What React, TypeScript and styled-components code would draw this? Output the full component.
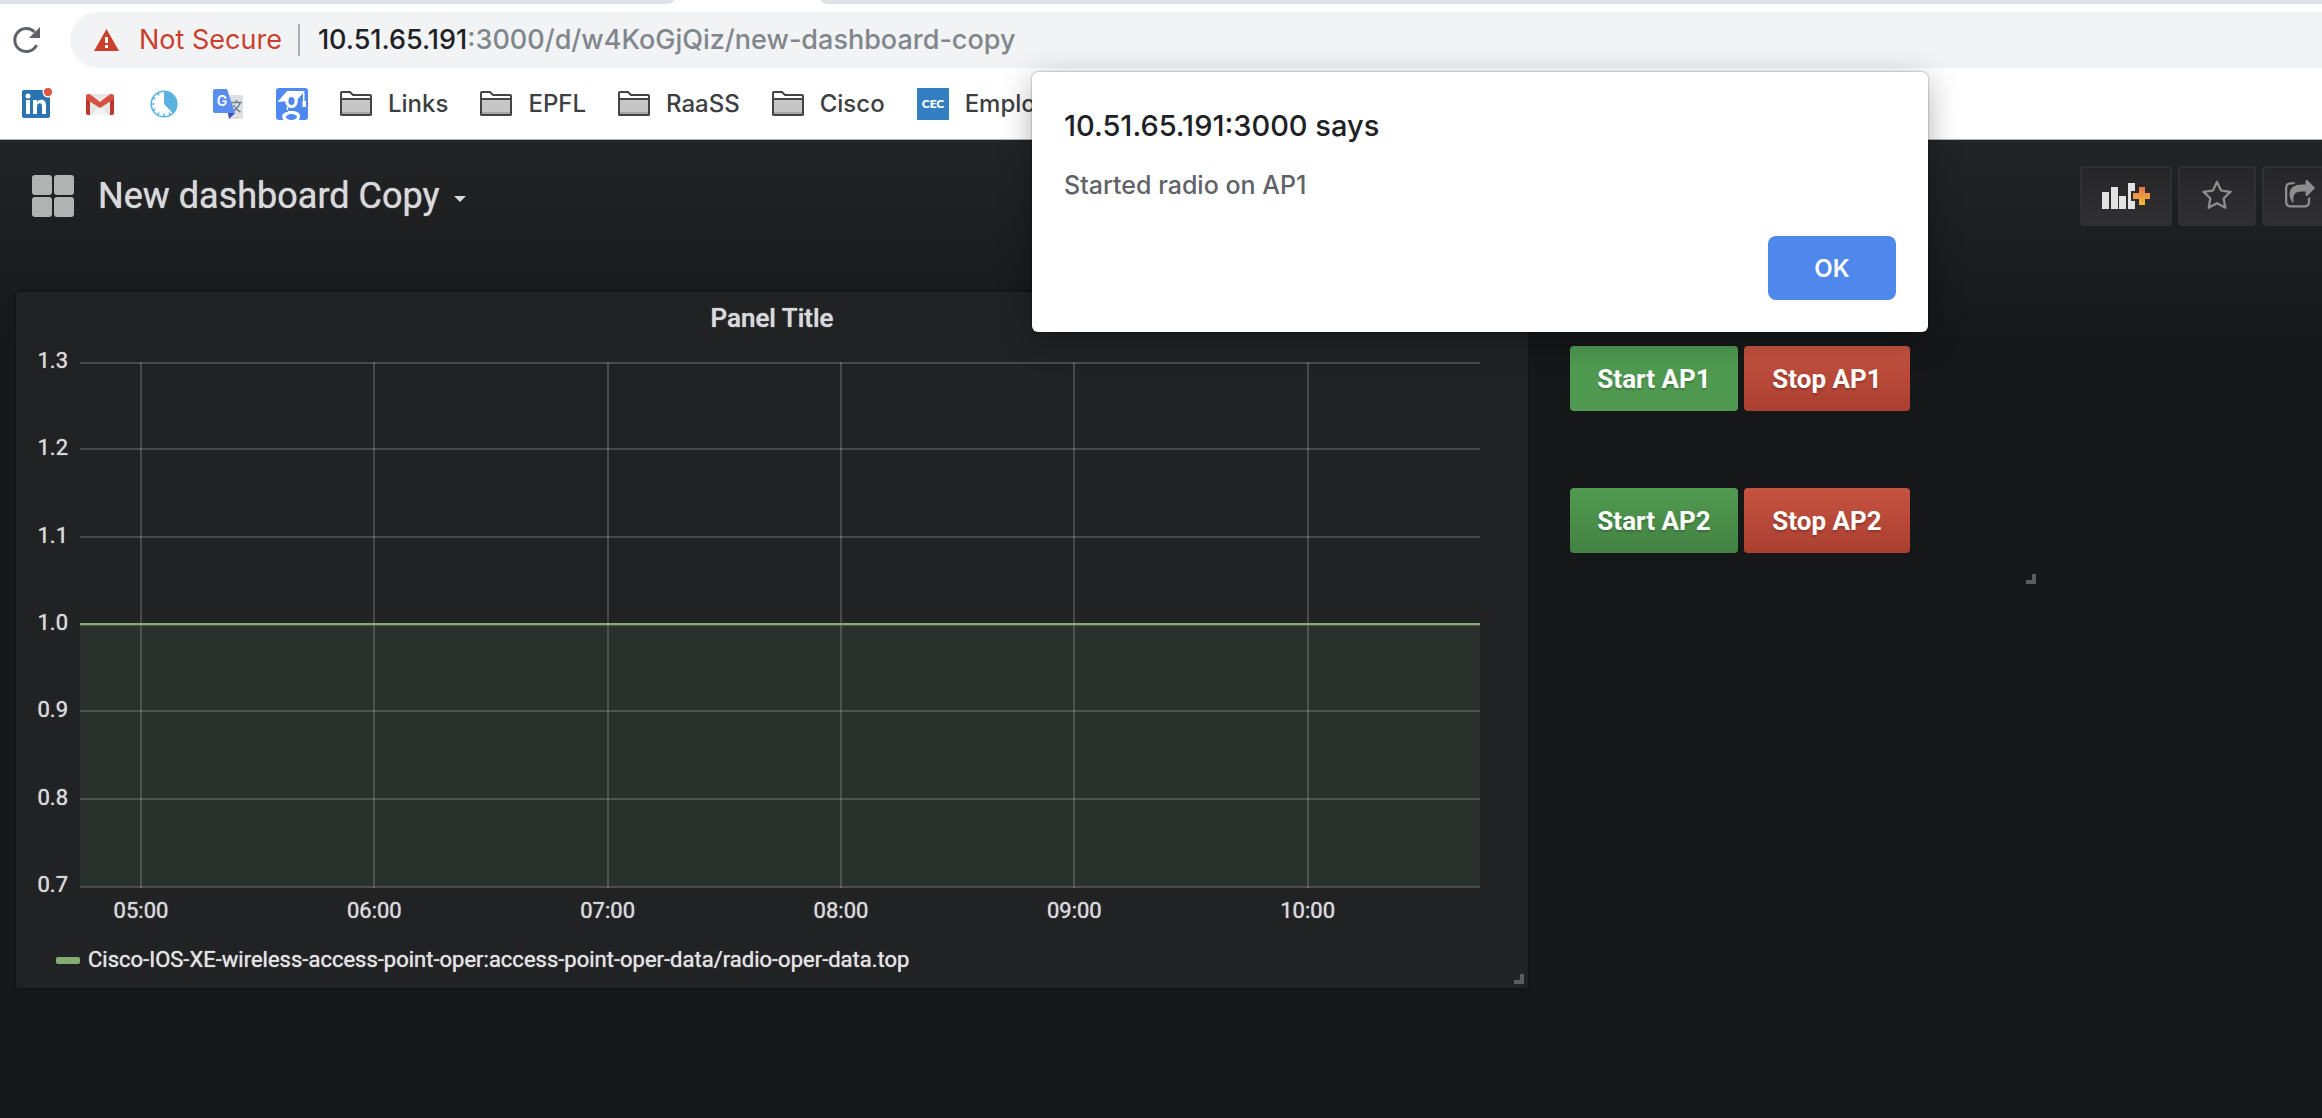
import React from "react";
import styled, { createGlobalStyle } from "styled-components";

const GlobalStyle = createGlobalStyle`
  *, *::before, *::after { box-sizing: border-box; }
  body { margin: 0; background: #161719; overflow: hidden; }
  button { font: inherit; border: 0; padding: 0; cursor: pointer; }
  a { color: inherit; text-decoration: none; }
  h1, h2, p { margin: 0; font: inherit; }
  svg { display: block; flex: none; }
`;

const Window = styled.div`
  position: relative;
  display: flex;
  flex-direction: column;
  min-height: 100vh;
  overflow: hidden;
`;

/* ---------- browser chrome ---------- */

const Chrome = styled.header`
  background: #fff;
  border-bottom: 1px solid #b0b2b4;
  font-family: Inter, "Liberation Sans", sans-serif;
`;

const TabStrip = styled.div`
  display: flex;
  height: 4px;
`;

const TabEdge = styled.div<{ $side: "left" | "right" }>`
  background: #dee1e6;
  ${(p) =>
    p.$side === "left"
      ? "flex: 0 0 674px; border-bottom-right-radius: 8px 4px;"
      : "flex: 1; margin-left: 147px; border-bottom-left-radius: 8px 4px;"}
`;

const Toolbar = styled.div`
  display: flex;
  align-items: center;
  padding: 8px 0 6px 12px;
  gap: 28px;
`;

const IconButton = styled.button`
  background: none;
`;

const AddressBar = styled.div`
  flex: 1;
  display: flex;
  align-items: center;
  height: 56px;
  padding-left: 24px;
  border-radius: 28px 0 0 28px;
  background: #f1f3f4;
  font-size: 27px;
  line-height: 32px;
  white-space: nowrap;
`;

const Security = styled.span`
  display: flex;
  align-items: center;
  gap: 20px;
  height: 32px;
  margin-right: 18px;
  padding-right: 16px;
  border-right: 2px solid #a9acb0;
  color: #cb3f2e;
`;

const Url = styled.span`
  color: #80868b;
  font-weight: 500;
`;

const Host = styled.span`
  color: #202124;
`;

const Bookmarks = styled.nav`
  display: flex;
  align-items: center;
  gap: 32px;
  height: 65px;
  padding: 0 20px 5px;
  font-size: 24px;
  font-weight: 500;
  line-height: 30px;
  color: #3c4043;
  white-space: nowrap;
`;

const Bookmark = styled.a`
  display: flex;
  align-items: center;
  gap: 16px;
`;

/* ---------- dashboard ---------- */

const Dashboard = styled.main`
  flex: 1;
  background: #161719 linear-gradient(#222426, #161719) 0 0 / 100% 200px no-repeat;
  color: #d8d9da;
  font-family: Roboto, "Liberation Sans", sans-serif;
`;

const NavBar = styled.div`
  display: flex;
  align-items: center;
  gap: 24px;
  padding: 26px 0 64px 32px;
`;

const DashTitle = styled.h1`
  flex: 1;
`;

const TitleButton = styled.button`
  display: flex;
  align-items: center;
  gap: 14px;
  background: none;
  color: #d8d9da;
  font-size: 36px;
  line-height: 44px;
  text-shadow: 0 0 1px currentColor;
`;

const Caret = styled.span`
  margin-top: 6px;
  border: 6px solid transparent;
  border-top-color: #d8d9da;
  border-bottom: 0;
`;

const Actions = styled.div`
  display: flex;
  gap: 6px;
  margin-right: -18px;
`;

const NavButton = styled.button<{ $wide?: boolean }>`
  display: flex;
  align-items: center;
  justify-content: center;
  width: ${(p) => (p.$wide ? 92 : 78)}px;
  height: 60px;
  border: 2px solid #2f2f32;
  border-radius: 4px;
  background: linear-gradient(#262628, #303032);
`;

const PanelGrid = styled.div`
  display: grid;
  grid-template-columns: repeat(18, minmax(0, 1fr));
  align-items: start;
  gap: 20px;
  padding: 0 24px 0 14px;
`;

const Panel = styled.section<{ $span: number; $clear?: boolean }>`
  position: relative;
  grid-column: span ${(p) => p.$span};
  border: 2px solid ${(p) => (p.$clear ? "transparent" : "#141516")};
  border-radius: 6px;
  background: ${(p) => (p.$clear ? "transparent" : "#212224")};
`;

const PanelTitle = styled.h2`
  padding-top: 8px;
  font-size: 26px;
  font-weight: 500;
  line-height: 36px;
  text-align: center;
  text-shadow: 0 0 1px currentColor;
`;

const Plot = styled.svg`
  width: calc(100% - 112px);
  height: 526px;
  margin: 26px 48px 0 64px;
  overflow: visible;
  font-size: 22px;
  text-shadow: 0 0 1px #d8d9da;
`;

const Legend = styled.div`
  display: flex;
  align-items: center;
  gap: 8px;
  padding: 56px 0 12px 40px;
  font-size: 22px;
  line-height: 32px;
  color: #e3e3e3;
  text-shadow: 0 0 1px currentColor;
`;

const Swatch = styled.span`
  width: 24px;
  height: 7px;
  border-radius: 2px;
  background: #84ab72;
`;

const ResizeHandle = styled.span`
  position: absolute;
  right: 4px;
  bottom: 4px;
  width: 10px;
  height: 10px;
  border: solid #5c5c5d;
  border-width: 0 4px 4px 0;
`;

const ControlPanel = styled(Panel)`
  display: flex;
  flex-direction: column;
  gap: 77px;
  padding: 54px 18px 35px;
`;

const ControlRow = styled.div`
  display: flex;
  gap: 6px;
`;

const ApButton = styled.button<{ $tone: "go" | "lit" | "stop" }>`
  width: ${(p) => (p.$tone === "stop" ? 166 : 168)}px;
  height: 65px;
  border-radius: 4px;
  color: #fff;
  font-size: 26px;
  font-weight: 700;
  line-height: 32px;
  text-shadow: 0 2px 2px rgba(0, 0, 0, 0.2);
  background: ${(p) =>
    ({
      go: "linear-gradient(#509a50, #438243)",
      lit: "#4f9a50",
      stop: "linear-gradient(#c65341, #aa3f30)",
    })[p.$tone]};
`;

/* ---------- alert ---------- */

const Alert = styled.div`
  position: absolute;
  top: 72px;
  left: 1032px;
  display: flex;
  flex-direction: column;
  width: 896px;
  padding: 34px 32px 32px;
  border-radius: 6px;
  background: #fff;
  box-shadow: 0 0 2px rgba(0, 0, 0, 0.5), 0 8px 32px rgba(0, 0, 0, 0.3);
  font-family: Inter, "Liberation Sans", sans-serif;
  font-weight: 500;
`;

const AlertTitle = styled.h2`
  font-size: 29px;
  line-height: 40px;
  color: #202124;
`;

const AlertText = styled.p`
  margin: 22px 0 34px;
  font-size: 25px;
  line-height: 34px;
  color: #5f6368;
`;

const OkButton = styled.button`
  align-self: flex-end;
  width: 128px;
  height: 64px;
  border-radius: 8px;
  background: #4f87ed;
  color: #fff;
  font-size: 24px;
  font-weight: 600;
`;

/* ---------- icons ---------- */

const ReloadIcon = () => (
  <svg width="30" height="30" viewBox="0 0 30 30" fill="none">
    <path d="M24.6 20.2A11.5 11.5 0 1 1 22.5 7" stroke="#5f6368" strokeWidth="3" />
    <path d="M28 2v11H17z" fill="#5f6368" />
  </svg>
);

const WarningIcon = () => (
  <svg width="25" height="22" viewBox="0 0 25 22">
    <path d="M12.500 0 25 22H0z" fill="#cb3f2e" />
    <path d="M11 8h3v6h-3zM11 16h3v3h-3z" fill="#fff" />
  </svg>
);

const LinkedInIcon = () => (
  <svg width="32" height="32" viewBox="0 0 32 32">
    <rect x="2" y="2" width="28" height="28" rx="2" fill="#2b73b1" />
    <circle cx="8" cy="8" r="2.500" fill="#fff" />
    <path d="M6 12h4v14H6zM13 12h4v2c1-1.600 2.500-2.300 4.300-2.300 3.500 0 4.700 2.300 4.700 5.800V26h-4v-7.500c0-2-.6-3.200-2.200-3.200-1.900 0-2.800 1.400-2.800 3.300V26h-4z" fill="#fff" />
    <circle cx="28" cy="4" r="5.500" fill="#fff" />
    <circle cx="28" cy="4" r="4.200" fill="#df5548" />
  </svg>
);

const GmailIcon = () => (
  <svg width="32" height="32" viewBox="0 0 32 32">
    <path d="M3 6h26v21H3z" fill="#e6e6e6" />
    <path d="M7 27 16 18l9 9z" fill="#f3f3f3" />
    <path d="M2 8v17a2 2 0 0 0 2 2h2V9zM30 8v17a2 2 0 0 1-2 2h-2V9z" fill="#b93a2d" />
    <path d="M2 8c0-2 3-3 5-1l9 7 9-7c2-2 5-1 5 1v3L16 20 2 11z" fill="#d64f41" />
  </svg>
);

const ClockIcon = () => (
  <svg width="32" height="32" viewBox="0 0 32 32">
    <circle cx="16" cy="16" r="12.800" fill="#fff" stroke="#5ab4df" strokeWidth="1.600" />
    <path d="M16 16V3a13 13 0 0 1 9 22.400z" fill="#5ab4df" />
    <g stroke="#5ab4df" strokeWidth="1.600">
      <path d="M3 16h3.500M16 29v-3.500M9.500 4.700l1.500 2.700M4.700 9.500l2.700 1.500M4.700 22.500l2.700-1.500M9.500 27.300l1.500-2.700M22.500 27.300 21 24.600" />
    </g>
  </svg>
);

const TranslateIcon = () => (
  <svg width="32" height="32" viewBox="0 0 32 32">
    <path d="M12 7h17a2 2 0 0 1 2 2v20a2 2 0 0 1-2 2H17z" fill="#dedfe1" />
    <path d="M19 14.500h11M24.500 12v2.500M28 14.500c-1 4-4 7-7 9M21.500 17c1.500 3 4 5.500 7 7" stroke="#6d8391" strokeWidth="1.500" fill="none" />
    <path d="M16 25h7l-6 6z" fill="#3a4fb5" />
    <path d="M3 1h12l8 24H3a2 2 0 0 1-2-2V3a2 2 0 0 1 2-2z" fill="#5a8df0" />
    <text x="10" y="17.500" textAnchor="middle" fontSize="14" fontWeight="600" fill="#fff">G</text>
  </svg>
);

const ScholarIcon = () => (
  <svg width="32" height="32" viewBox="0 0 32 32">
    <rect width="32" height="32" rx="3" fill="#4f88ef" />
    <path d="M11 3h18l-9 10H13L1.500 14z" fill="#fff" />
    <path d="M27 5h1.500v8H30v6h-3.500v-6H27z" fill="#fff" />
    <ellipse cx="15.500" cy="13" rx="4.700" ry="5.500" fill="#4f88ef" stroke="#fff" strokeWidth="3.200" />
    <path d="M12 18c-3 3-1 5 3 5 6 0 9 1.500 9 5.500 0 1.300-.4 2.500-1 3.500H7.500C4 27 8 24 12 24" fill="#fff" />
    <ellipse cx="15.500" cy="29" rx="5.500" ry="3" fill="#4f88ef" />
  </svg>
);

const FolderIcon = () => (
  <svg width="32" height="32" viewBox="0 0 32 32">
    <path d="M1 26V5a1 1 0 0 1 1-1h8l3 3h17a1 1 0 0 1 1 1v18a1 1 0 0 1-1 1H2a1 1 0 0 1-1-1z" fill="#fff" stroke="#444" strokeWidth="2" />
    <path d="M1 11h30v15a1 1 0 0 1-1 1H2a1 1 0 0 1-1-1z" fill="#c6c6c6" stroke="#444" strokeWidth="2" />
    <path d="M2 25h28" stroke="#a5a5a5" strokeWidth="2" />
  </svg>
);

const CecIcon = () => (
  <svg width="32" height="32" viewBox="0 0 32 32">
    <rect width="32" height="32" fill="#337fc1" />
    <text x="16" y="20" textAnchor="middle" fontFamily="Lato, sans-serif" fontSize="12" fontWeight="800" fill="#fff">CEC</text>
  </svg>
);

const GridIcon = () => (
  <svg width="42" height="42" viewBox="0 0 42 42" fill="#b1b2b2">
    <rect width="20" height="20" rx="3" />
    <rect x="22" width="20" height="20" rx="3" />
    <rect y="22" width="20" height="20" rx="3" />
    <rect x="22" y="22" width="20" height="20" rx="3" />
  </svg>
);

const AddPanelIcon = () => (
  <svg width="48" height="26" viewBox="0 0 48 26">
    <defs>
      <linearGradient id="plus" x1="0" y1="4" x2="0" y2="22" gradientUnits="userSpaceOnUse">
        <stop stopColor="#e5744a" />
        <stop offset="1" stopColor="#f1bd38" />
      </linearGradient>
    </defs>
    <path d="M0 9h7v17H0zM9 4h7v22H9zM17 13h7v13h-7zM26 0h7v8h-4v10h4v8h-7z" fill="#e3e3e3" />
    <path d="M37 4h6v6h5v6h-5v6h-6v-6h-6v-6h6z" fill="url(#plus)" />
  </svg>
);

const StarIcon = () => (
  <svg width="32" height="32" viewBox="0 0 1792 1792" fill="#8e8e8e">
    <path d="M1201 1004l306-297-422-62-189-382-189 382-422 62 306 297-73 421 378-199 377 199zm527-357q0 22-26 48l-363 354 86 500q1 7 1 20 0 50-41 50-19 0-40-12l-449-236-449 236q-22 12-40 12-21 0-31.500-14.500t-10.500-35.500q0-6 2-20l86-500-364-354q-25-27-25-48 0-37 56-46l502-73 225-455q19-41 49-41t49 41l225 455 502 73q56 9 56 46z" />
  </svg>
);

const ShareIcon = () => (
  <svg width="32" height="32" viewBox="0 0 1792 1792" fill="#8e8e8e">
    <path d="M1408 989v259q0 119-84.500 203.500t-203.500 84.500h-832q-119 0-203.500-84.500t-84.500-203.500v-832q0-119 84.500-203.500t203.500-84.500h255q13 0 22.500 9.500t9.500 22.500q0 27-26 32-77 26-133 60-10 4-16 4h-112q-66 0-113 47t-47 113v832q0 66 47 113t113 47h832q66 0 113-47t47-113v-214q0-19 18-28 28-13 54-37 16-16 35-8 21 9 21 29zm237-496l-384 384q-18 19-45 19-12 0-25-5-39-17-39-59v-192h-160q-323 0-438 131-119 137-74 473 3 23-20 34-8 2-12 2-16 0-26-13-10-14-21-31t-39.500-68.500-49.500-99.500-38.500-114-17.500-122q0-49 3.500-91t14-90 28-88 47-81.500 68.500-74 94.500-61.500 124.500-48.500 159.500-30.500 196.500-11h160v-192q0-42 39-59 13-5 25-5 26 0 45 19l384 384q19 19 19 45t-19 45z" />
  </svg>
);

/* ---------- data ---------- */

const BOOKMARKS = [
  { name: "LinkedIn", icon: LinkedInIcon, iconOnly: true },
  { name: "Gmail", icon: GmailIcon, iconOnly: true },
  { name: "Time tracker", icon: ClockIcon, iconOnly: true },
  { name: "Google Translate", icon: TranslateIcon, iconOnly: true },
  { name: "Google Scholar", icon: ScholarIcon, iconOnly: true },
  { name: "Links", icon: FolderIcon },
  { name: "EPFL", icon: FolderIcon },
  { name: "RaaSS", icon: FolderIcon },
  { name: "Cisco", icon: FolderIcon },
  { name: "Employee", icon: CecIcon },
];

const VALUES = ["1.3", "1.2", "1.1", "1.0", "0.9", "0.8", "0.7"];
const HOURS = ["05:00", "06:00", "07:00", "08:00", "09:00", "10:00"];

/* The visible range is six hours, starting 15 minutes 40 seconds before 05:00. */
const hourX = (i: number) => `${((i * 60 + 15.68) / 360) * 100}%`;
const valueY = (i: number) => (i * 524) / (VALUES.length - 1);
/* Grid lines are two pixels thick and sit on even rows. */
const gridY = (i: number) => 1 + 2 * Math.floor(valueY(i) / 2);
const seriesY = gridY(3) - 1;

const Chart = () => (
  <Plot role="img" aria-label="Radio operational data">
    <rect x="0" y={seriesY} width="100%" height={gridY(6) - seriesY} fill="#7eb26d" fillOpacity="0.1" />
    <g stroke="#c8c8c8" strokeOpacity="0.24" strokeWidth="2" shapeRendering="crispEdges">
      {VALUES.map((v, i) => (
        <line key={v} x1="0" x2="100%" y1={gridY(i)} y2={gridY(i)} />
      ))}
      {HOURS.map((h, i) => (
        <line key={h} x1={hourX(i)} x2={hourX(i)} y1="0" y2="526" />
      ))}
    </g>
    <line x1="0" x2="100%" y1={seriesY} y2={seriesY} stroke="#8aad78" strokeWidth="2" shapeRendering="crispEdges" />
    <g fill="#d8d9da">
      {VALUES.map((v, i) => (
        <text key={v} x="-12" y={Math.round(valueY(i)) + 6} textAnchor="end">{v}</text>
      ))}
      {HOURS.map((h, i) => (
        <text key={h} x={hourX(i)} y="556" textAnchor="middle">{h}</text>
      ))}
    </g>
  </Plot>
);

export default function App() {
  return (
    <Window>
      <GlobalStyle />
      <Chrome>
        <TabStrip>
          <TabEdge $side="left" />
          <TabEdge $side="right" />
        </TabStrip>
        <Toolbar>
          <IconButton type="button" aria-label="Reload"><ReloadIcon /></IconButton>
          <AddressBar>
            <Security><WarningIcon />Not Secure</Security>
            <Url><Host>10.51.65.191</Host>:3000/d/w4KoGjQiz/new-dashboard-copy</Url>
          </AddressBar>
        </Toolbar>
        <Bookmarks aria-label="Bookmarks">
          {BOOKMARKS.map(({ name, icon: Icon, iconOnly }) => (
            <Bookmark key={name} href="#" aria-label={name}>
              <Icon />
              {!iconOnly && name}
            </Bookmark>
          ))}
        </Bookmarks>
      </Chrome>

      <Dashboard>
        <NavBar>
          <GridIcon />
          <DashTitle>
            <TitleButton type="button">New dashboard Copy<Caret /></TitleButton>
          </DashTitle>
          <Actions>
            <NavButton type="button" $wide aria-label="Add panel"><AddPanelIcon /></NavButton>
            <NavButton type="button" aria-label="Mark as favorite"><StarIcon /></NavButton>
            <NavButton type="button" aria-label="Share dashboard"><ShareIcon /></NavButton>
          </Actions>
        </NavBar>
        <PanelGrid>
          <Panel $span={12}>
            <PanelTitle>Panel Title</PanelTitle>
            <Chart />
            <Legend>
              <Swatch />
              Cisco-IOS-XE-wireless-access-point-oper:access-point-oper-data/radio-oper-data.top
            </Legend>
            <ResizeHandle />
          </Panel>
          <ControlPanel $span={4} $clear>
            <ControlRow>
              <ApButton type="button" $tone="lit">Start AP1</ApButton>
              <ApButton type="button" $tone="stop">Stop AP1</ApButton>
            </ControlRow>
            <ControlRow>
              <ApButton type="button" $tone="go">Start AP2</ApButton>
              <ApButton type="button" $tone="stop">Stop AP2</ApButton>
            </ControlRow>
            <ResizeHandle />
          </ControlPanel>
        </PanelGrid>
      </Dashboard>

      <Alert role="alertdialog" aria-labelledby="alert-title" aria-describedby="alert-text">
        <AlertTitle id="alert-title">10.51.65.191:3000 says</AlertTitle>
        <AlertText id="alert-text">Started radio on AP1</AlertText>
        <OkButton type="button">OK</OkButton>
      </Alert>
    </Window>
  );
}
